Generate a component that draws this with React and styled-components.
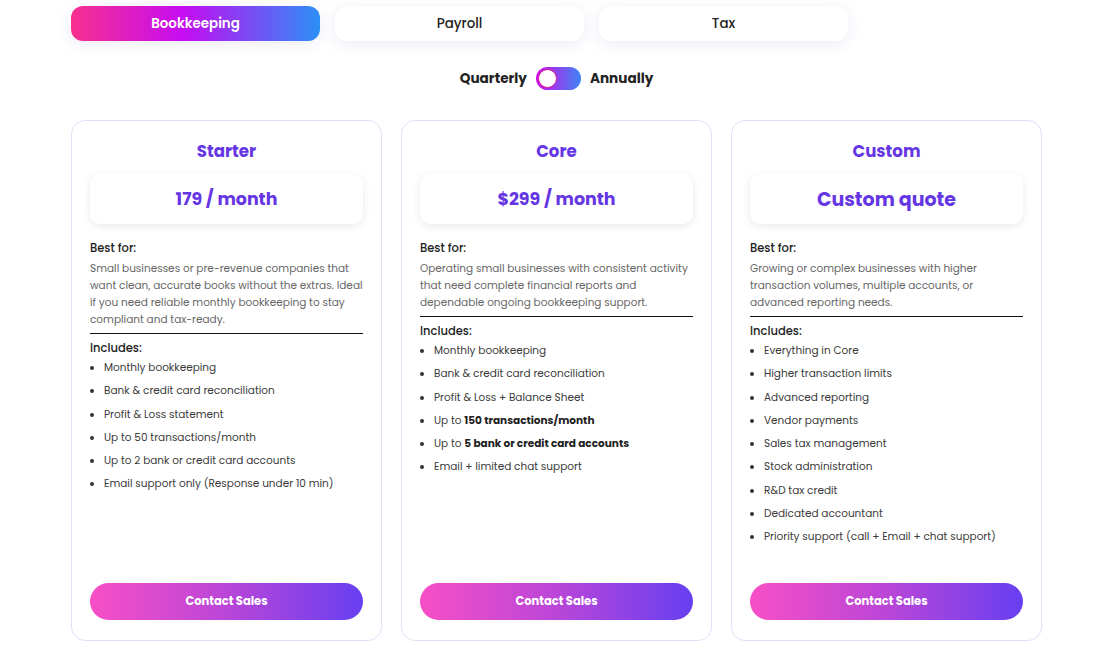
import React, { useState } from "react";
import styled, { createGlobalStyle } from "styled-components";

const GlobalStyle = createGlobalStyle`
  body {
    margin: 0;
    background: #ffffff;
    font-family: Poppins, "Open Sans", "Noto Sans", sans-serif;
    color: #222;
  }
`;

const Page = styled.div`
  width: 971px;
  margin-left: calc(50% - 484.5px);
  padding-top: 6px;
`;

const Tabs = styled.div`
  display: flex;
  gap: 15px;
`;

const Tab = styled.button`
  width: 249px;
  height: 35px;
  border: none;
  border-radius: 12px;
  font-family: inherit;
  font-size: 13.4px;
  font-weight: ${(p) => (p.$active ? 600 : 500)};
  color: ${(p) => (p.$active ? "#fff" : "#222")};
  background: ${(p) =>
    p.$active
      ? "linear-gradient(90deg, #f7308e 0%, #c50cf2 45%, #2c8ff6 100%)"
      : "#fff"};
  box-shadow: 0 3px 14px rgba(110, 100, 200, 0.13);
  cursor: pointer;
`;

const ToggleRow = styled.div`
  display: flex;
  justify-content: center;
  align-items: center;
  gap: 9px;
  margin-top: 26px;
  font-size: 13.6px;
  font-weight: 700;
  color: #222;
`;

const Switch = styled.div`
  width: 45px;
  height: 23px;
  border-radius: 12px;
  background: linear-gradient(90deg, #d20be6 0%, #3d85f6 100%);
  display: flex;
  align-items: center;
  padding: 0 2px;
  box-sizing: border-box;
`;

const Knob = styled.div`
  width: 19px;
  height: 19px;
  border-radius: 50%;
  background: #fff;
  box-sizing: border-box;
  border: 1.5px solid #d61c8f;
`;

const Cards = styled.div`
  display: grid;
  grid-template-columns: repeat(3, 311px);
  gap: 19px;
  margin-top: 30px;
`;

const Card = styled.div`
  height: 521px;
  box-sizing: border-box;
  border: 1px solid #e2dff6;
  border-radius: 14px;
  background: #fff;
  padding: 19px 18px 20px;
  display: flex;
  flex-direction: column;
`;

const Title = styled.div`
  text-align: center;
  font-size: 16.6px;
  line-height: 24px;
  font-weight: 700;
  color: #6536e4;
`;

const PriceBox = styled.div`
  margin-top: 10px;
  height: 50px;
  border-radius: 10px;
  background: #fff;
  box-shadow: 0 2px 9px rgba(0, 0, 0, 0.09);
  display: flex;
  align-items: center;
  justify-content: center;
  font-size: ${(p) => (p.$big ? "19px" : "17.4px")};
  font-weight: 700;
  color: #6536e4;
`;

const Label = styled.div`
  font-size: 11.5px;
  line-height: 16px;
  font-weight: 500;
  color: #1c1c1c;
  margin-top: ${(p) => p.$top || "0"};
`;

const Desc = styled.p`
  margin: 4px 0 0;
  font-size: 10.5px;
  line-height: 17px;
  color: #666;
`;

const Rule = styled.hr`
  margin: 5px 0 6px;
  border: none;
  border-top: 1.5px solid #111;
`;

const List = styled.ul`
  margin: 0;
  padding-left: 14px;
  list-style: disc;
`;

const Item = styled.li`
  font-size: 10.5px;
  line-height: 23.3px;
  color: #3a3a3a;

  &::marker {
    color: #333;
  }

  b {
    font-weight: 700;
    color: #222;
  }
`;

const ContactButton = styled.button`
  margin-top: auto;
  height: 37px;
  width: 100%;
  border: none;
  border-radius: 19px;
  background: linear-gradient(90deg, #f74fc6 0%, #ba46d8 50%, #673ff1 100%);
  color: #fff;
  font-family: inherit;
  font-size: 11.5px;
  font-weight: 700;
  cursor: pointer;
`;

const plans = [
  {
    name: "Starter",
    price: "179 / month",
    desc: "Small businesses or pre-revenue companies that want clean, accurate books without the extras. Ideal if you need reliable monthly bookkeeping to stay compliant and tax-ready.",
    items: [
      "Monthly bookkeeping",
      "Bank & credit card reconciliation",
      "Profit & Loss statement",
      "Up to 50 transactions/month",
      "Up to 2 bank or credit card accounts",
      "Email support only (Response under 10 min)",
    ],
  },
  {
    name: "Core",
    price: "$299 / month",
    desc: "Operating small businesses with consistent activity that need complete financial reports and dependable ongoing bookkeeping support.",
    items: [
      "Monthly bookkeeping",
      "Bank & credit card reconciliation",
      "Profit & Loss + Balance Sheet",
      <>
        Up to <b>150 transactions/month</b>
      </>,
      <>
        Up to <b>5 bank or credit card accounts</b>
      </>,
      "Email + limited chat support",
    ],
  },
  {
    name: "Custom",
    price: "Custom quote",
    big: true,
    desc: "Growing or complex businesses with higher transaction volumes, multiple accounts, or advanced reporting needs.",
    items: [
      "Everything in Core",
      "Higher transaction limits",
      "Advanced reporting",
      "Vendor payments",
      "Sales tax management",
      "Stock administration",
      "R&D tax credit",
      "Dedicated accountant",
      "Priority support (call + Email + chat support)",
    ],
  },
];

export default function App() {
  const [tab, setTab] = useState("Bookkeeping");

  return (
    <Page>
      <GlobalStyle />
      <Tabs>
        {["Bookkeeping", "Payroll", "Tax"].map((t) => (
          <Tab key={t} $active={tab === t} onClick={() => setTab(t)}>
            {t}
          </Tab>
        ))}
      </Tabs>

      <ToggleRow>
        <span>Quarterly</span>
        <Switch>
          <Knob />
        </Switch>
        <span>Annually</span>
      </ToggleRow>

      <Cards>
        {plans.map((plan) => (
          <Card key={plan.name}>
            <Title>{plan.name}</Title>
            <PriceBox $big={plan.big}>{plan.price}</PriceBox>
            <Label $top="16px">Best for:</Label>
            <Desc>{plan.desc}</Desc>
            <Rule />
            <Label>Includes:</Label>
            <List>
              {plan.items.map((item, i) => (
                <Item key={i}>{item}</Item>
              ))}
            </List>
            <ContactButton>Contact Sales</ContactButton>
          </Card>
        ))}
      </Cards>
    </Page>
  );
}
